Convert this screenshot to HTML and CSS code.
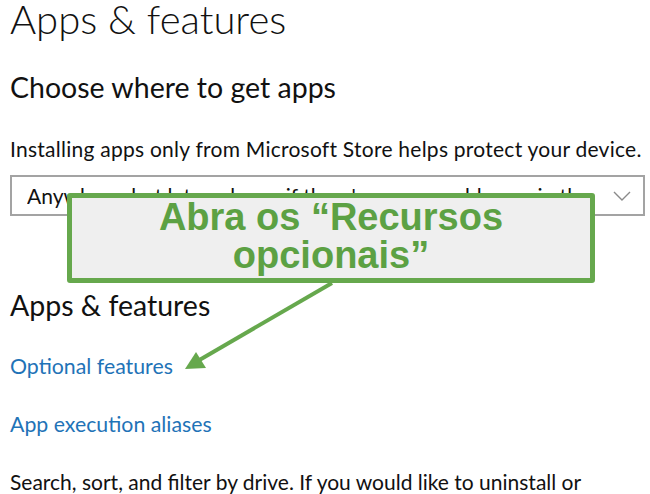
FILE: index.html
```html
<!DOCTYPE html>
<html lang="en">
<head>
    <meta charset="UTF-8">
    <meta name="viewport" content="width=device-width, initial-scale=1.0">
    <title>Apps &amp; features</title>
    <link rel="stylesheet" href="styles.css">
</head>
<body>
    <main class="page">
        <h1 class="title">Apps &amp; features</h1>

        <h2 class="subtitle">Choose where to get apps</h2>
        <p class="text lead">Installing apps only from Microsoft Store helps protect your device.</p>

        <div class="select">
            <span class="select-value">Anywhere, but let me know if there's a comparable app in the Microsoft Store</span>
            <svg class="chevron" width="18" height="10" viewBox="0 0 18 10">
                <polyline points="1,1 9,9 17,1" fill="none" stroke="#8a8a8a" stroke-width="1.4"/>
            </svg>
        </div>

        <h2 class="subtitle section">Apps &amp; features</h2>
        <a class="link" href="#">Optional features</a>
        <a class="link" href="#">App execution aliases</a>
        <p class="text last">Search, sort, and filter by drive. If you would like to uninstall or</p>

        <div class="callout">Abra os &ldquo;Recursos<br>opcionais&rdquo;</div>

        <svg class="arrow" width="650" height="494" viewBox="0 0 650 494">
            <line x1="332" y1="283" x2="196" y2="362" stroke="#66a84d" stroke-width="4"/>
            <polygon points="185,369 196,352 206,368" fill="#66a84d"/>
        </svg>
    </main>
</body>
</html>
```

FILE: styles.css
```css
body {
    margin: 0;
    background-color: #fff;
    color: #111;
    font-family: Lato, "Open Sans", sans-serif;
    overflow: hidden;
}
.page {
    position: relative;
    width: 650px;
    height: 494px;
    padding: 0 5px 0 10px;
    box-sizing: border-box;
    display: flex;
    flex-direction: column;
    align-items: flex-start;
}
.title {
    margin: 0;
    font-size: 40px;
    font-weight: 300;
    line-height: 38px;
}
.subtitle {
    margin: 33px 0 0;
    font-size: 28.5px;
    font-weight: 400;
    line-height: 32px;
}
.subtitle.section {
    margin-top: 73px;
}
.text {
    margin: 32px 0 0;
    font-size: 21px;
    line-height: 28px;
    white-space: nowrap;
}
.text.lead {
    letter-spacing: 0.25px;
}
.text.last {
    margin-top: 30px;
}
.select {
    margin-top: 12px;
    width: 100%;
    height: 42px;
    box-sizing: border-box;
    border: 2px solid #a3a3a3;
    padding: 0 12px 0 15px;
    display: flex;
    align-items: center;
    gap: 14px;
}
.select-value {
    flex: 1;
    font-size: 21px;
    line-height: 37px;
    white-space: nowrap;
    overflow: hidden;
    text-overflow: ellipsis;
}
.chevron {
    flex: none;
}
.link {
    margin-top: 31px;
    font-size: 21.3px;
    line-height: 28px;
    color: #1f73b7;
    text-decoration: none;
}
.link + .link {
    margin-top: 30px;
}
.callout {
    position: absolute;
    left: 67px;
    top: 193px;
    width: 528px;
    height: 90px;
    box-sizing: border-box;
    background-color: #efefef;
    border: 5px solid #66a84d;
    border-radius: 3px;
    font-family: "Liberation Sans", Arial, sans-serif;
    font-weight: bold;
    font-size: 38px;
    line-height: 38px;
    color: #5ca143;
    text-align: center;
}
.arrow {
    position: absolute;
    left: 0;
    top: 0;
    pointer-events: none;
}
```
